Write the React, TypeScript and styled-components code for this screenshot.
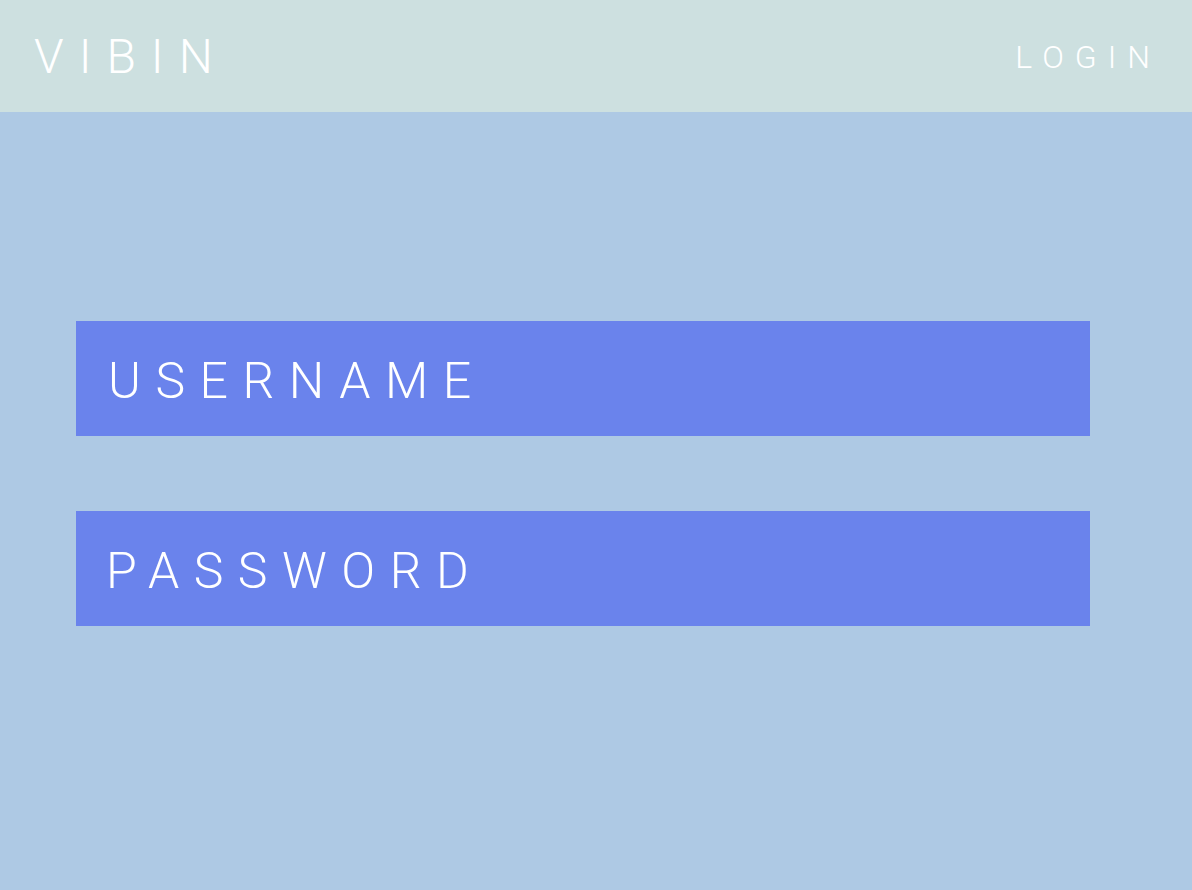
import React from "react";
import styled, { createGlobalStyle } from "styled-components";

const GlobalStyle = createGlobalStyle`
  html, body {
    margin: 0;
    padding: 0;
    background: #aec9e4;
  }
  body {
    font-family: Roboto, "Liberation Sans", sans-serif;
  }
`;

const Page = styled.div`
  min-height: 890px;
  background: #aec9e4;
  display: flex;
  flex-direction: column;
`;

const Header = styled.header`
  height: 112px;
  background: #cde0e0;
  display: flex;
  align-items: center;
  justify-content: space-between;
  padding: 0 31px 0 34px;
  box-sizing: border-box;
`;

const Logo = styled.h1`
  margin: 0;
  font-family: Roboto, "Liberation Sans", sans-serif;
  font-weight: 300;
  font-size: 48px;
  letter-spacing: 15px;
  color: #ffffff;
  line-height: 1;
  padding-top: 2px;
`;

const NavLink = styled.a`
  font-family: Roboto, "Liberation Sans", sans-serif;
  font-weight: 300;
  font-size: 32px;
  letter-spacing: 11px;
  color: #ffffff;
  line-height: 1;
  text-decoration: none;
  cursor: pointer;
  margin-top: 2px;
`;

const Form = styled.form`
  display: flex;
  flex-direction: column;
  gap: 75px;
  padding: 209px 0 0 76px;
`;

const Field = styled.div`
  width: 1014px;
  height: 115px;
  background: #6a83ec;
  display: flex;
  align-items: center;
  padding-left: ${(p: { $indent: number }) => p.$indent}px;
  box-sizing: border-box;
`;

const FieldLabel = styled.span`
  font-family: Roboto, "Liberation Sans", sans-serif;
  font-weight: 300;
  font-size: 50px;
  letter-spacing: 14.5px;
  color: #ffffff;
  line-height: 1;
  margin-top: 4px;
`;

export default function App() {
  return (
    <>
      <GlobalStyle />
      <Page>
        <Header>
          <Logo>VIBIN</Logo>
          <NavLink>LOGIN</NavLink>
        </Header>
        <Form onSubmit={(e) => e.preventDefault()}>
          <Field $indent={32}>
            <FieldLabel>USERNAME</FieldLabel>
          </Field>
          <Field $indent={30}>
            <FieldLabel>PASSWORD</FieldLabel>
          </Field>
        </Form>
      </Page>
    </>
  );
}
